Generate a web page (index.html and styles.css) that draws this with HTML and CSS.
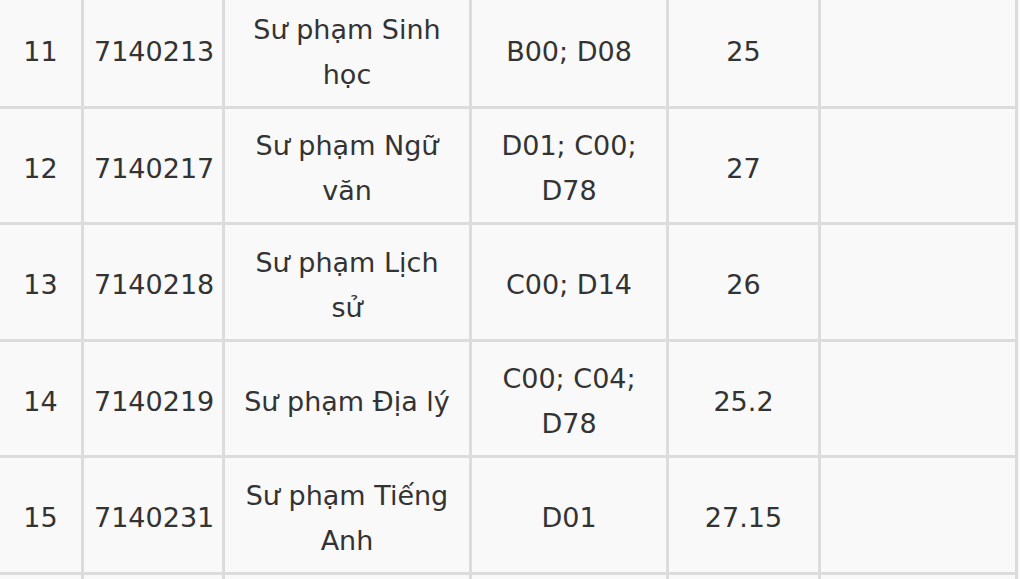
FILE: index.html
```html
<!DOCTYPE html>
<html lang="vi">
<head>
<meta charset="utf-8">
<title>Điểm chuẩn</title>
<link rel="stylesheet" href="styles.css">
</head>
<body>
<table class="scores">
  <colgroup>
    <col class="c1"><col class="c2"><col class="c3"><col class="c4"><col class="c5"><col class="c6">
  </colgroup>
  <tbody>
    <tr><td>11</td><td>7140213</td><td class="name">Sư phạm Sinh học</td><td>B00; D08</td><td>25</td><td></td></tr>
    <tr><td>12</td><td>7140217</td><td class="name">Sư phạm Ngữ văn</td><td>D01; C00; D78</td><td>27</td><td></td></tr>
    <tr><td>13</td><td>7140218</td><td class="name">Sư phạm Lịch sử</td><td>C00; D14</td><td>26</td><td></td></tr>
    <tr><td>14</td><td>7140219</td><td class="name">Sư phạm Địa lý</td><td>C00; C04; D78</td><td>25.2</td><td></td></tr>
    <tr><td>15</td><td>7140231</td><td class="name">Sư phạm Tiếng Anh</td><td>D01</td><td>27.15</td><td></td></tr>
    <tr><td></td><td></td><td class="name"></td><td></td><td></td><td></td></tr>
  </tbody>
</table>
</body>
</html>
```
FILE: styles.css
```css
html, body {
  margin: 0;
  padding: 0;
  background: #f9f9f9;
  overflow: hidden;
}

.scores {
  border-collapse: collapse;
  table-layout: fixed;
  width: 1018px;
  margin: -11px 0 0 -3px;
  background: #f9f9f9;
  font-family: "DejaVu Sans", Verdana, sans-serif;
  font-size: 27px;
  line-height: 45px;
  color: #333;
}

.c1 { width: 84px; }
.c2 { width: 141px; }
.c3 { width: 247px; }
.c4 { width: 197px; }
.c5 { width: 152px; }
.c6 { width: 197px; }

.scores tr {
  height: 116.5px;
}

.scores td {
  border: 3px solid #dcdcdc;
  padding: 6px 10px 0;
  text-align: center;
  vertical-align: middle;
}

.scores td.name {
  padding-left: 15px;
  padding-right: 15px;
}
```
